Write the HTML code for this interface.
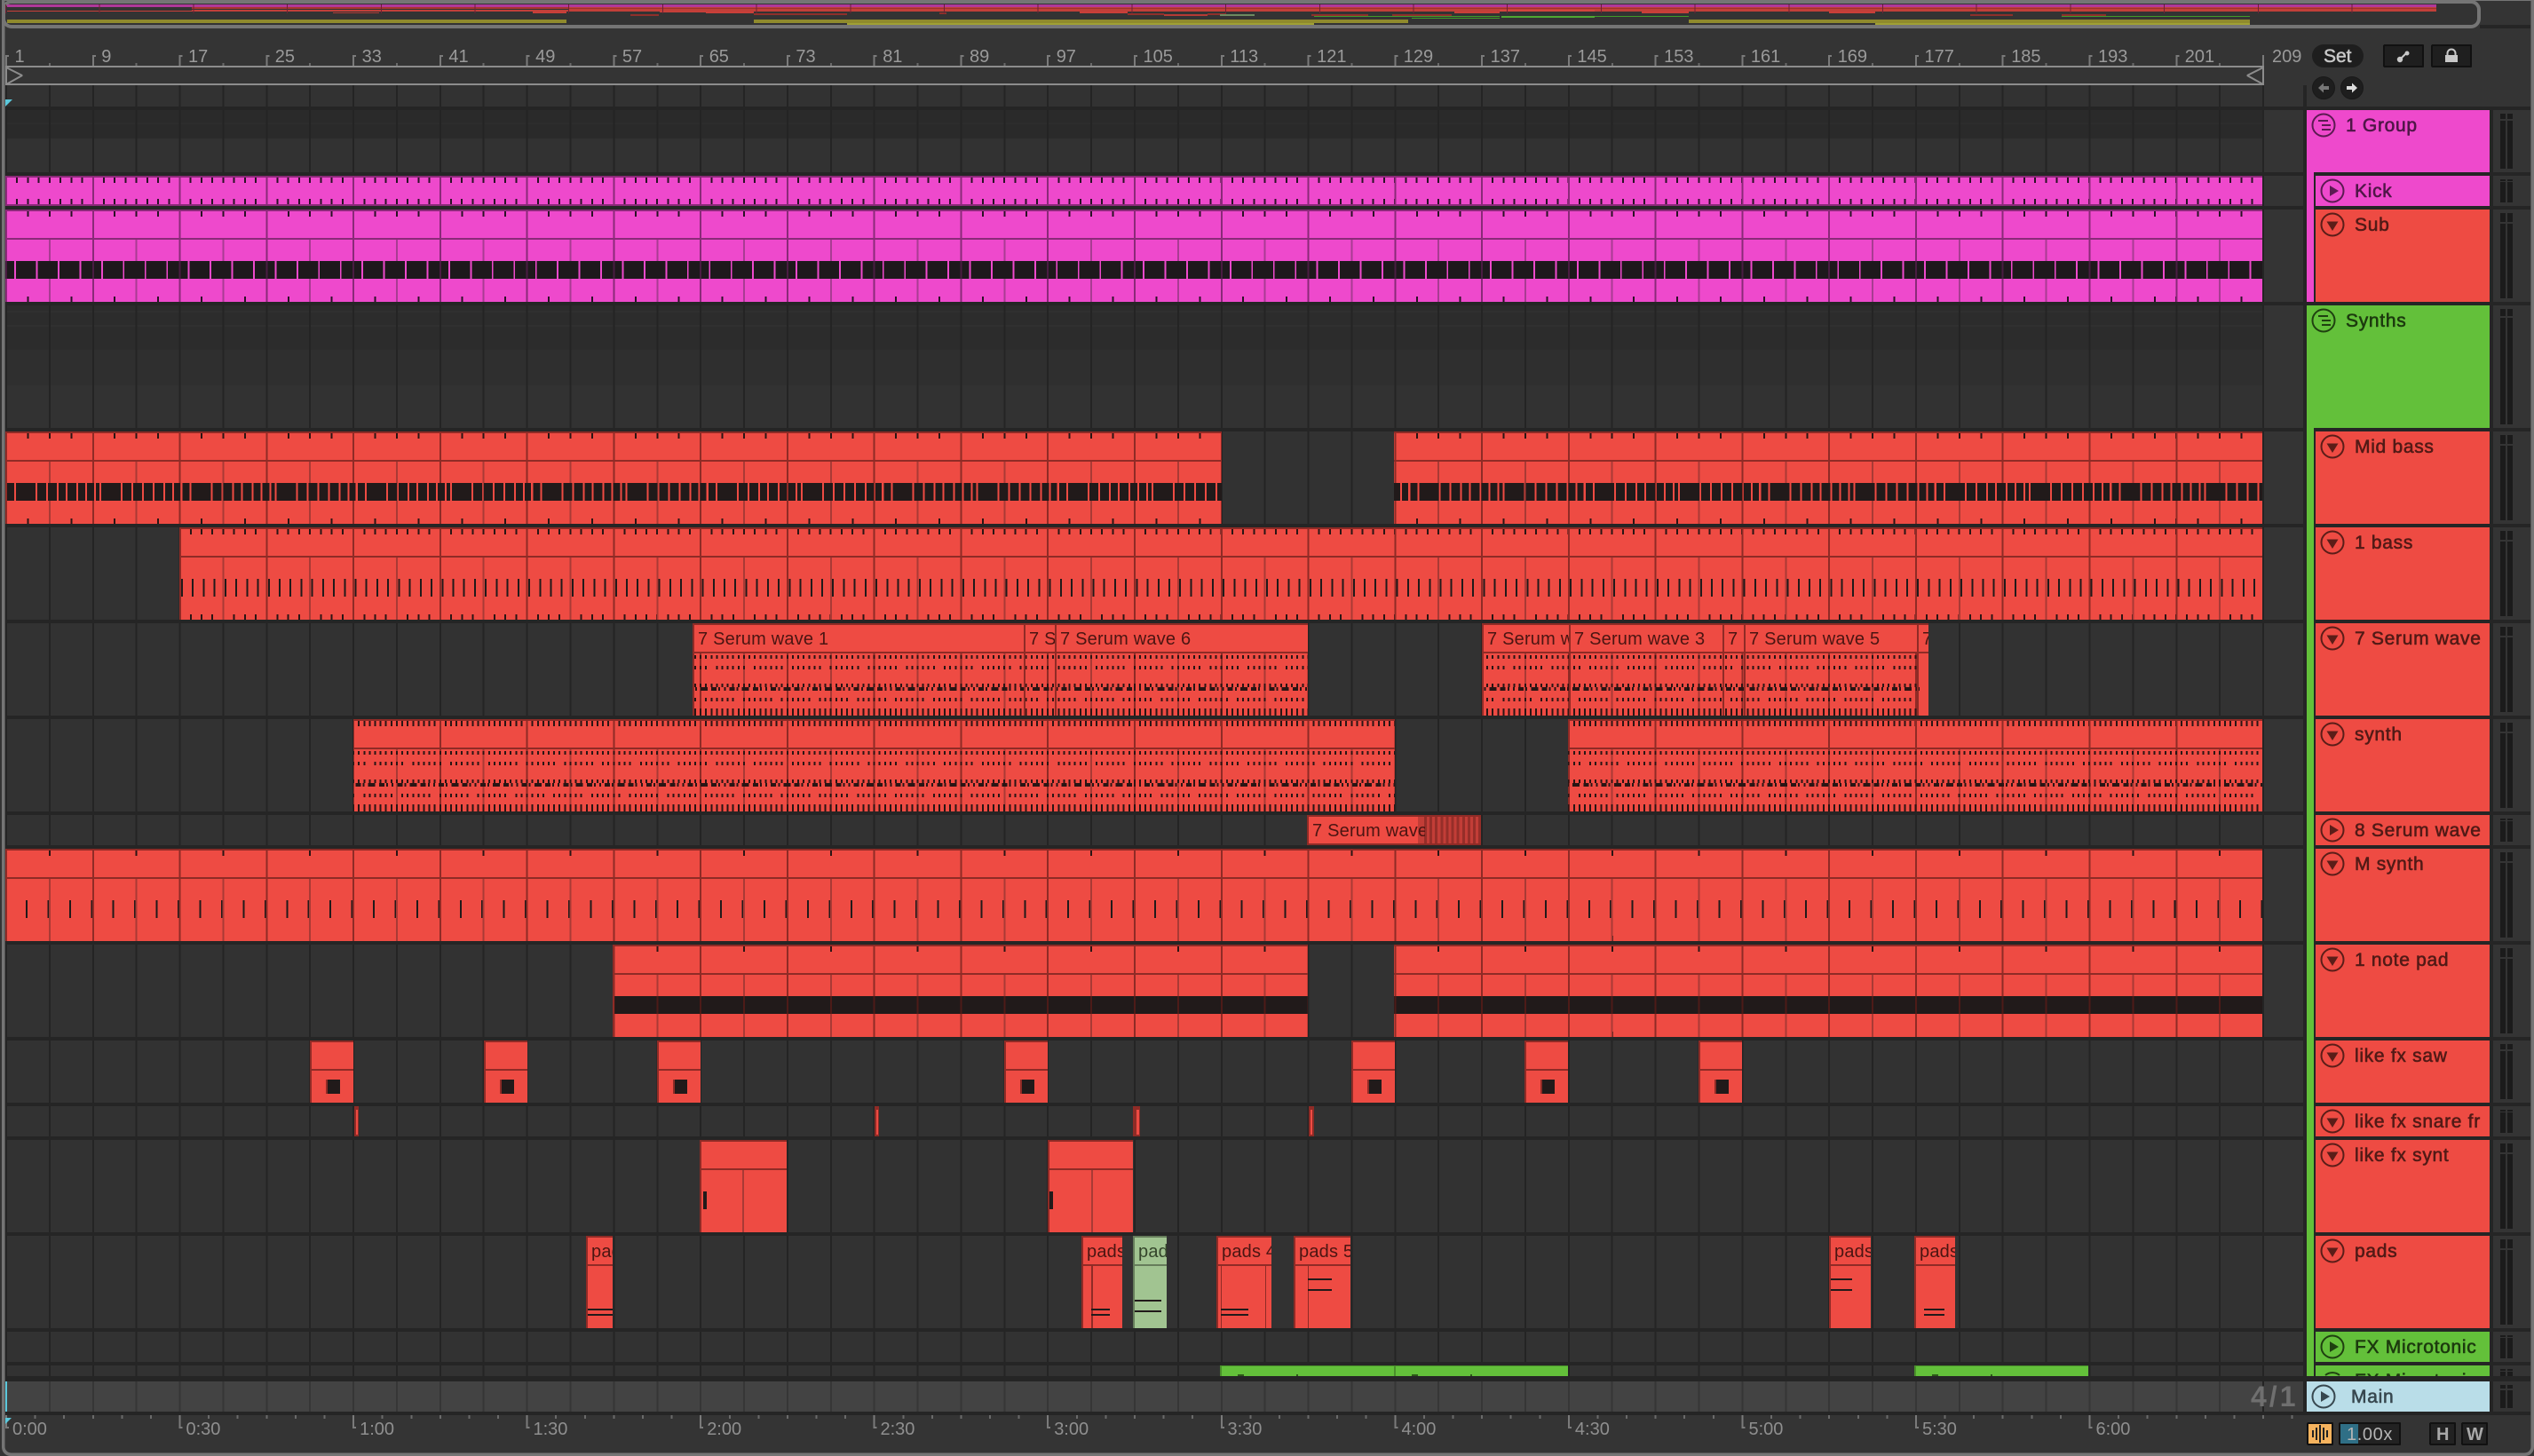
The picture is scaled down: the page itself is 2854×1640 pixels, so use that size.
<!DOCTYPE html>
<html>
<head>
<meta charset="utf-8">
<title>Arrangement</title>
<style>
html,body{margin:0;padding:0;background:#333;width:2854px;height:1640px;overflow:hidden}
svg{display:block}
svg rect{shape-rendering:crispEdges}
path{fill:none;shape-rendering:crispEdges}
*{stroke-linejoin:bevel}
text{font-family:"Liberation Sans",sans-serif}
.r{fill:#ee4b43}.d{fill:#8f2b26}.p{fill:#ee49cc}.dp{fill:#8a2a78}.g{fill:#63c03a}.k{fill:#211a1a}.gap{fill:#252525}
.maj{stroke-dasharray:2 95.77}
.min{stroke-dasharray:2 46.885}
.t24{stroke-dasharray:2 22.4425}
.t12{stroke-dasharray:2 10.22}
.t6{stroke-dasharray:2 4.11}
.rul{font-size:20px;fill:#9a9a9a}
.ct{font-size:20px;letter-spacing:.2px;fill:#4b1512}
.h{font-size:21px;letter-spacing:.7px;stroke-width:.6px;paint-order:stroke}
.hp{fill:#4f1647;stroke:#4f1647}.hr{fill:#521a16;stroke:#521a16}.hg{fill:#1c3a0e;stroke:#1c3a0e}
.i{fill:none;stroke-width:2;shape-rendering:geometricPrecision}
.ip{stroke:#5c1a52}.ir{stroke:#5b1d18}.ig{stroke:#1f4010}
</style>
</head>
<body>
<svg xmlns="http://www.w3.org/2000/svg" width="2854" height="1640" viewBox="0 0 2854 1640">
<defs>
<clipPath id="cMB"><rect x="6" y="486" width="1370" height="104"/><rect x="1570" y="486" width="978" height="104"/></clipPath>
<clipPath id="cBS"><rect x="202" y="594" width="2346" height="104"/></clipPath>
<clipPath id="cSW"><rect x="780" y="702" width="693" height="104"/><rect x="1669" y="702" width="503" height="104"/></clipPath>
<clipPath id="cSY"><rect x="398" y="810" width="1173" height="104"/><rect x="1766" y="810" width="782" height="104"/></clipPath>
<clipPath id="cNP"><rect x="690" y="1064" width="783" height="104"/><rect x="1570" y="1064" width="978" height="104"/></clipPath>
<g id="dots">
<path d="M6 38H2550" stroke="#2a1514" stroke-width="4" class="t6"/>
<path d="M6 50H2550" stroke="#2a1514" stroke-width="4" stroke-dasharray="2 4.11 2 4.11 2 4.11 2 10.22 2 4.11 2 4.11"/>
<path d="M6 70H2550" stroke="#2a1514" stroke-width="4" class="t6"/>
<path d="M6 74H2550" stroke="#2a1514" stroke-width="4" stroke-dasharray="6 2.11 2 4.11 2 4.11 6 2.11 2 4.11 8 4.22"/>
<path d="M6 86H2550" stroke="#2a1514" stroke-width="4" stroke-dasharray="2 4.11 2 10.22 2 4.11 2 4.11 2 4.11 2 4.11"/>
<path d="M6 100H2550" stroke="#2a1514" stroke-width="8" class="t6"/>
</g>
<g id="saw">
<rect x="0" y="1172" width="49" height="70" class="r"/>
<rect x="0" y="1172" width="49" height="2" class="d"/>
<rect x="0" y="1172" width="2" height="70" class="d"/>
<rect x="0" y="1204" width="49" height="2" class="d"/>
<rect x="18" y="1216" width="3" height="16" class="d"/>
<rect x="20" y="1216" width="14" height="16" class="k"/>
</g>
</defs>

<rect width="2854" height="1640" fill="#343434"/>

<!-- overview -->
<rect x="4" y="2" width="2788" height="28" rx="9" fill="#333" stroke="#757575" stroke-width="4" style="shape-rendering:geometricPrecision"/>
<rect x="8" y="5" width="2736" height="3" fill="#b0399a"/>
<rect x="8" y="12" width="208" height="1" fill="#c93f39"/>
<rect x="216" y="8" width="424" height="2" fill="#a8362f"/>
<rect x="216" y="11" width="424" height="2" fill="#c0403a"/>
<rect x="375" y="14" width="52" height="1" fill="#b03a35"/>
<rect x="600" y="13" width="38" height="2" fill="#c93f39"/>
<rect x="640" y="8" width="2104" height="5" fill="#c23f39"/>
<rect x="640" y="9" width="2104" height="1" fill="#9c322d"/>
<rect x="743" y="13" width="52" height="1" fill="#c93f39"/>
<rect x="795" y="13" width="54" height="2" fill="#c93f39"/>
<rect x="710" y="16" width="32" height="2" fill="#8e2f2b"/>
<rect x="849" y="15" width="105" height="2" fill="#8e2f2b"/>
<rect x="1058" y="14" width="8" height="2" fill="#8e2f2b"/>
<rect x="1216" y="13" width="54" height="2" fill="#c93f39"/>
<rect x="1270" y="15" width="41" height="2" fill="#8e2f2b"/>
<rect x="1311" y="16" width="49" height="2" fill="#b53a35"/>
<rect x="1360" y="15" width="21" height="2" fill="#8e2f2b"/>
<rect x="1374" y="16" width="39" height="2" fill="#6d8a60"/>
<rect x="1477" y="16" width="64" height="2" fill="#8e2f2b"/>
<rect x="1568" y="16" width="67" height="2" fill="#8e2f2b"/>
<rect x="1638" y="13" width="51" height="2" fill="#c93f39"/>
<rect x="1689" y="11" width="107" height="2" fill="#d4453e"/>
<rect x="1849" y="12" width="53" height="3" fill="#c93f39"/>
<rect x="2060" y="13" width="52" height="2" fill="#c93f39"/>
<rect x="2219" y="16" width="48" height="2" fill="#8e2f2b"/>
<rect x="2322" y="16" width="50" height="2" fill="#8e2f2b"/>
<rect x="1480" y="18" width="209" height="1" fill="#3f9a2a"/>
<rect x="1590" y="20" width="99" height="1" fill="#3f9a2a"/>
<rect x="1691" y="18" width="105" height="2" fill="#4fa832"/>
<rect x="1796" y="18" width="106" height="1" fill="#3f9a2a"/>
<rect x="2322" y="18" width="212" height="1" fill="#3f9a2a"/>
<rect x="8" y="22" width="630" height="4" fill="#8f8a2c"/>
<rect x="849" y="22" width="737" height="4" fill="#8f8a2c"/>
<rect x="1902" y="22" width="632" height="4" fill="#8f8a2c"/>
<rect x="954" y="26" width="526" height="2" fill="#a0a033"/>
<rect x="2112" y="26" width="422" height="2" fill="#a0a033"/>
<path d="M6 10H2744" stroke="#6e2035" stroke-width="10" stroke-dasharray="1 104.7"/>
<rect x="2793" y="28" width="57" height="4" fill="#252525"/>

<!-- beat ruler -->
<path d="M6 68.500H2550" stroke="#7a7a7a" stroke-width="13" class="maj"/>
<path d="M6 63H2550" stroke="#7a7a7a" stroke-width="2" stroke-dasharray="4 93.77"/>
<path d="M54.890 72.500H2550" stroke="#6a6a6a" stroke-width="3" class="maj"/>
<g transform="translate(2.500 0)">
<text class="rul" x="14" y="70">1</text><text class="rul" x="111.800" y="70">9</text><text class="rul" x="209.500" y="70">17</text><text class="rul" x="307.300" y="70">25</text><text class="rul" x="405.100" y="70">33</text><text class="rul" x="502.900" y="70">41</text><text class="rul" x="600.600" y="70">49</text><text class="rul" x="698.400" y="70">57</text><text class="rul" x="796.200" y="70">65</text><text class="rul" x="893.900" y="70">73</text><text class="rul" x="991.700" y="70">81</text><text class="rul" x="1089.500" y="70">89</text><text class="rul" x="1187.200" y="70">97</text><text class="rul" x="1285" y="70">105</text><text class="rul" x="1382.800" y="70">113</text><text class="rul" x="1480.600" y="70">121</text><text class="rul" x="1578.300" y="70">129</text><text class="rul" x="1676.100" y="70">137</text><text class="rul" x="1773.900" y="70">145</text><text class="rul" x="1871.600" y="70">153</text><text class="rul" x="1969.400" y="70">161</text><text class="rul" x="2067.200" y="70">169</text><text class="rul" x="2165" y="70">177</text><text class="rul" x="2262.700" y="70">185</text><text class="rul" x="2360.500" y="70">193</text><text class="rul" x="2458.300" y="70">201</text><text class="rul" x="2556.500" y="70">209</text>
</g>
<!-- scrub area -->
<rect x="6" y="74" width="2544" height="2" fill="#8c8c8c"/>
<rect x="6" y="94" width="2544" height="2" fill="#8c8c8c"/>
<path d="M7 76L25 85L7 95M2549 76L2531 85L2549 95M2549 74V96M7 74V96" stroke="#8c8c8c" stroke-width="2" style="shape-rendering:geometricPrecision"/>

<!-- arrangement background -->
<rect x="6" y="96" width="2544" height="1454" fill="#323232"/>
<rect x="6" y="124" width="2544" height="32" fill="#2a2a2a"/>
<rect x="6" y="138" width="2544" height="2" fill="#2d2d2d"/>
<rect x="6" y="344" width="2544" height="50" fill="#2c2c2c"/>
<rect x="6" y="350" width="2544" height="2" fill="#303030"/>
<rect x="6" y="366" width="2544" height="2" fill="#303030"/>
<rect x="6" y="394" width="2544" height="40" fill="#2f2f2f"/>
<rect x="6" y="1556" width="2544" height="34" fill="#434343"/>
<!-- grid lines, stacked rows -->
<path d="M6 188H2550" stroke="#242424" stroke-width="184" class="min"/>
<path d="M6 400H2550" stroke="#242424" stroke-width="240" class="min"/>
<path d="M6 640H2550" stroke="#242424" stroke-width="240" class="min"/>
<path d="M6 880H2550" stroke="#242424" stroke-width="240" class="min"/>
<path d="M6 1120H2550" stroke="#242424" stroke-width="240" class="min"/>
<path d="M6 1320H2550" stroke="#242424" stroke-width="160" class="min"/>
<path d="M6 1448H2550" stroke="#242424" stroke-width="96" class="min"/>
<path d="M6 1523H2550" stroke="#242424" stroke-width="54" class="min"/>
<path d="M6 1564.500H2550" stroke="#363636" stroke-width="17" class="min"/>
<path d="M6 1581.500H2550" stroke="#363636" stroke-width="17" class="min"/>
<rect x="2548" y="96" width="2" height="1494" fill="#242424"/>
<rect x="2550" y="1556" width="44" height="34" fill="#3f3f3f"/>

<!-- horizontal gaps -->
<g class="gap">
<rect x="6" y="120" width="2844" height="4"/><rect x="6" y="194" width="2844" height="4"/><rect x="6" y="232" width="2844" height="4"/><rect x="6" y="340" width="2844" height="4"/><rect x="6" y="482" width="2844" height="4"/><rect x="6" y="590" width="2844" height="4"/><rect x="6" y="698" width="2844" height="4"/><rect x="6" y="806" width="2844" height="4"/><rect x="6" y="914" width="2844" height="4"/><rect x="6" y="952" width="2844" height="4"/><rect x="6" y="1060" width="2844" height="4"/><rect x="6" y="1168" width="2844" height="4"/><rect x="6" y="1242" width="2844" height="4"/><rect x="6" y="1280" width="2844" height="4"/><rect x="6" y="1388" width="2844" height="4"/><rect x="6" y="1496" width="2844" height="4"/><rect x="6" y="1534" width="2844" height="4"/><rect x="6" y="1550" width="2844" height="6"/><rect x="6" y="1590" width="2844" height="4"/>
</g>

<!-- Kick -->
<rect x="6" y="198" width="2542" height="34" class="p"/>
<path d="M18.220 203H2548" stroke="#2a1226" stroke-width="6" class="t12"/>
<path d="M18.220 227H2548" stroke="#2a1226" stroke-width="6" class="t12"/>
<path d="M6 215H2548" stroke="#8a2a78" stroke-width="34" class="maj"/>
<rect x="6" y="198" width="2542" height="2" class="dp"/>
<rect x="6" y="230" width="2542" height="2" class="dp"/>

<!-- Sub -->
<rect x="6" y="236" width="2542" height="104" class="p"/>
<path d="M30.440 241H2548" stroke="#2a1226" stroke-width="6" class="t24"/>
<path d="M30.440 337H2548" stroke="#2a1226" stroke-width="6" class="t24"/>
<path d="M6 305H2548" stroke="#a83c92" stroke-width="70" class="min"/>
<path d="M6 288H2548" stroke="#8a2a78" stroke-width="104" class="maj"/>
<rect x="6" y="236" width="2542" height="2" class="dp"/>
<rect x="6" y="268" width="2542" height="2" class="dp"/>
<path d="M8 304H16" stroke="#1e181c" stroke-width="20"/>
<path d="M18 304H2548" stroke="#1e181c" stroke-width="20" stroke-dasharray="22.6 1.8425"/>
<path d="M6 304H2548" stroke="#4a1c42" stroke-width="20" class="maj"/>

<!-- Mid bass -->
<g clip-path="url(#cMB)">
<rect x="6" y="486" width="2544" height="104" class="r"/>
<path d="M30.440 491H2550" stroke="#2a1514" stroke-width="6" class="t24"/>
<path d="M30.440 587H2550" stroke="#2a1514" stroke-width="6" class="t24"/>
<path d="M6 555H2550" stroke="#a93a35" stroke-width="70" class="min"/>
<path d="M6 538H2550" stroke="#8f2b26" stroke-width="104" class="maj"/>
<rect x="6" y="486" width="2544" height="2" class="d"/>
<rect x="6" y="518" width="2544" height="2" class="d"/>
<path d="M8 554H2550" stroke="#211a1a" stroke-width="20" stroke-dasharray="8 2 22 2 10 2 10 2 8 2 10 2 8 2 8 2 4 2 22 2 10 2 10 2 10 2 10 2 8 2 7 2.54"/>
</g>

<!-- 1 bass -->
<g clip-path="url(#cBS)">
<rect x="202" y="594" width="2346" height="104" class="r"/>
<path d="M201.540 599H2550" stroke="#2a1514" stroke-width="6" class="t12"/>
<path d="M201.540 695H2550" stroke="#2a1514" stroke-width="6" class="t12"/>
<path d="M204 662H2550" stroke="#211a1a" stroke-width="20" class="t12"/>
<path d="M6 663H2550" stroke="#a93a35" stroke-width="70" class="min"/>
<path d="M6 646H2550" stroke="#8f2b26" stroke-width="104" class="maj"/>
<rect x="202" y="594" width="2346" height="2" class="d"/>
<rect x="202" y="626" width="2346" height="2" class="d"/>
<rect x="202" y="594" width="2" height="104" class="d"/>
</g>

<!-- 7 Serum wave -->
<g clip-path="url(#cSW)">
<rect x="780" y="702" width="2000" height="104" class="r"/>
<path d="M6 771H2550" stroke="#a93a35" stroke-width="70" class="min"/>
<path d="M6 771H2550" stroke="#8f2b26" stroke-width="70" class="maj"/>
<use href="#dots" y="702"/>
<rect x="780" y="702" width="1400" height="2" class="d"/>
<rect x="780" y="734" width="1400" height="2" class="d"/>
<g class="d">
<rect x="780" y="702" width="2" height="104"/><rect x="1153" y="702" width="2" height="104"/><rect x="1188" y="702" width="2" height="104"/><rect x="1669" y="702" width="2" height="104"/><rect x="1767" y="702" width="2" height="104"/><rect x="1940" y="702" width="2" height="104"/><rect x="1964" y="702" width="2" height="104"/><rect x="2159" y="702" width="2" height="104"/>
</g>
</g>
<rect x="2162" y="738" width="10" height="68" class="r"/>
<svg x="780" y="702" width="373" height="34"><text class="ct" x="6" y="24">7 Serum wave 1</text></svg>
<svg x="1153" y="702" width="35" height="34"><text class="ct" x="6" y="24">7 Serum wave 2</text></svg>
<svg x="1188" y="702" width="285" height="34"><text class="ct" x="6" y="24">7 Serum wave 6</text></svg>
<svg x="1669" y="702" width="98" height="34"><text class="ct" x="6" y="24">7 Serum wave 2</text></svg>
<svg x="1767" y="702" width="173" height="34"><text class="ct" x="6" y="24">7 Serum wave 3</text></svg>
<svg x="1940" y="702" width="24" height="34"><text class="ct" x="6" y="24">7 Serum wave 4</text></svg>
<svg x="1964" y="702" width="195" height="34"><text class="ct" x="6" y="24">7 Serum wave 5</text></svg>
<svg x="2159" y="702" width="13" height="34"><text class="ct" x="6" y="24">7 Serum wave 7</text></svg>

<!-- synth -->
<g clip-path="url(#cSY)">
<rect x="398" y="810" width="2150" height="104" class="r"/>
<path d="M6 815H2550" stroke="#2a1514" stroke-width="6" class="t6"/>
<path d="M6 879H2550" stroke="#a93a35" stroke-width="70" class="min"/>
<path d="M6 862H2550" stroke="#8f2b26" stroke-width="104" class="maj"/>
<use href="#dots" y="810"/>
<rect x="398" y="810" width="2150" height="2" class="d"/>
<rect x="398" y="842" width="2150" height="2" class="d"/>
</g>

<!-- 8 Serum wave clip -->
<rect x="1472" y="918" width="196" height="34" class="r"/>
<rect x="1597" y="918" width="71" height="34" fill="#c23d37"/>
<path d="M1604 935H1668" stroke="#962e29" stroke-width="32" stroke-dasharray="3 3.11"/>
<rect x="1472" y="918" width="196" height="2" class="d"/>
<rect x="1472" y="950" width="196" height="2" class="d"/>
<rect x="1472" y="918" width="2" height="34" class="d"/>
<svg x="1472" y="918" width="133" height="34"><text class="ct" x="6" y="24">7 Serum wave 8</text></svg>

<!-- M synth -->
<rect x="6" y="956" width="2542" height="104" class="r"/>
<path d="M54.890 961H2548" stroke="#2a1514" stroke-width="6" class="maj"/>
<path d="M54.890 1057H2548" stroke="#2a1514" stroke-width="6" class="maj"/>
<path d="M28.940 1024H2548" stroke="#211a1a" stroke-width="20" class="t24"/>
<path d="M6 1025H2548" stroke="#a93a35" stroke-width="70" class="min"/>
<path d="M6 1008H2548" stroke="#8f2b26" stroke-width="104" class="maj"/>
<rect x="6" y="956" width="2542" height="2" class="d"/>
<rect x="6" y="988" width="2542" height="2" class="d"/>

<!-- 1 note pad -->
<g clip-path="url(#cNP)">
<rect x="690" y="1064" width="1860" height="104" class="r"/>
<path d="M54.890 1069H2550" stroke="#2a1514" stroke-width="6" class="maj"/>
<path d="M54.890 1165H2550" stroke="#2a1514" stroke-width="6" class="maj"/>
<path d="M6 1133H2550" stroke="#a93a35" stroke-width="70" class="min"/>
<path d="M6 1116H2550" stroke="#8f2b26" stroke-width="104" class="maj"/>
<rect x="690" y="1064" width="1860" height="2" class="d"/>
<rect x="690" y="1096" width="1860" height="2" class="d"/>
<rect x="690" y="1122" width="1860" height="20" class="k"/>
<path d="M6 1132H2550" stroke="#4d1b18" stroke-width="20" class="min"/>
</g>
<rect x="690" y="1064" width="2" height="104" class="d"/>

<!-- like fx saw -->
<use href="#saw" x="349"/><use href="#saw" x="545"/><use href="#saw" x="740"/><use href="#saw" x="1131"/><use href="#saw" x="1522"/><use href="#saw" x="1717"/><use href="#saw" x="1913"/>

<!-- like fx snare -->
<rect x="399" y="1246" width="5" height="34" class="d"/><rect x="401" y="1250" width="2" height="28" class="r"/>
<rect x="985" y="1246" width="5" height="34" class="d"/><rect x="987" y="1250" width="2" height="28" class="r"/>
<rect x="1276" y="1246" width="8" height="34" class="d"/><rect x="1280" y="1250" width="3" height="28" class="r"/>
<rect x="1474" y="1246" width="6" height="34" class="d"/><rect x="1476" y="1250" width="2" height="28" class="r"/>

<!-- like fx synt -->
<rect x="788" y="1284" width="98" height="104" class="r"/>
<rect x="788" y="1284" width="98" height="2" class="d"/><rect x="788" y="1316" width="98" height="2" class="d"/><rect x="788" y="1284" width="2" height="104" class="d"/>
<rect x="836" y="1318" width="2" height="70" fill="#a93a35"/>
<rect x="792" y="1342" width="4" height="20" class="k"/>
<rect x="1180" y="1284" width="96" height="104" class="r"/>
<rect x="1180" y="1284" width="96" height="2" class="d"/><rect x="1180" y="1316" width="96" height="2" class="d"/><rect x="1180" y="1284" width="2" height="104" class="d"/>
<rect x="1229" y="1318" width="2" height="70" fill="#a93a35"/>
<rect x="1182" y="1342" width="4" height="20" class="k"/>

<!-- pads -->
<rect x="660" y="1392" width="30" height="104" class="r"/><rect x="660" y="1392" width="30" height="2" class="d"/><rect x="660" y="1424" width="30" height="2" class="d"/><rect x="660" y="1392" width="2" height="104" class="d"/>
<rect x="662" y="1474" width="28" height="2" class="k"/><rect x="662" y="1480" width="28" height="2" class="k"/>
<svg x="660" y="1392" width="30" height="34"><text class="ct" x="6" y="24">pads 1</text></svg>

<rect x="1218" y="1392" width="46" height="104" class="r"/><rect x="1218" y="1392" width="46" height="2" class="d"/><rect x="1218" y="1424" width="46" height="2" class="d"/><rect x="1218" y="1392" width="2" height="104" class="d"/><rect x="1229" y="1426" width="2" height="70" class="d"/>
<rect x="1229" y="1474" width="21" height="2" class="k"/><rect x="1229" y="1480" width="21" height="2" class="k"/>
<svg x="1218" y="1392" width="46" height="34"><text class="ct" x="6" y="24">pads 2</text></svg>

<rect x="1276" y="1392" width="38" height="104" fill="#a1c491"/><rect x="1276" y="1392" width="38" height="2" fill="#667d5b"/><rect x="1276" y="1424" width="38" height="2" fill="#667d5b"/><rect x="1276" y="1392" width="2" height="104" fill="#667d5b"/>
<rect x="1278" y="1464" width="30" height="2" class="k"/><rect x="1278" y="1476" width="30" height="2" class="k"/>
<svg x="1276" y="1392" width="38" height="34"><text class="ct" x="6" y="24" style="fill:#34452b">pads 3</text></svg>

<rect x="1370" y="1392" width="62" height="104" class="r"/><rect x="1370" y="1392" width="62" height="2" class="d"/><rect x="1370" y="1424" width="62" height="2" class="d"/><rect x="1370" y="1392" width="2" height="104" class="d"/><rect x="1375" y="1426" width="1" height="70" class="d"/><rect x="1425" y="1426" width="1" height="70" class="d"/>
<rect x="1375" y="1474" width="31" height="2" class="k"/><rect x="1375" y="1480" width="31" height="2" class="k"/>
<svg x="1370" y="1392" width="62" height="34"><text class="ct" x="6" y="24">pads 4</text></svg>

<rect x="1457" y="1392" width="64" height="104" class="r"/><rect x="1457" y="1392" width="64" height="2" class="d"/><rect x="1457" y="1424" width="64" height="2" class="d"/><rect x="1457" y="1392" width="2" height="104" class="d"/><rect x="1473" y="1426" width="1" height="70" class="d"/>
<rect x="1473" y="1440" width="27" height="2" class="k"/><rect x="1473" y="1452" width="27" height="2" class="k"/>
<svg x="1457" y="1392" width="64" height="34"><text class="ct" x="6" y="24">pads 5</text></svg>

<rect x="2060" y="1392" width="47" height="104" class="r"/><rect x="2060" y="1392" width="47" height="2" class="d"/><rect x="2060" y="1424" width="47" height="2" class="d"/><rect x="2060" y="1392" width="2" height="104" class="d"/>
<rect x="2062" y="1440" width="24" height="2" class="k"/><rect x="2062" y="1452" width="24" height="2" class="k"/>
<svg x="2060" y="1392" width="47" height="34"><text class="ct" x="6" y="24">pads 6</text></svg>

<rect x="2156" y="1392" width="46" height="104" class="r"/><rect x="2156" y="1392" width="46" height="2" class="d"/><rect x="2156" y="1424" width="46" height="2" class="d"/><rect x="2156" y="1392" width="2" height="104" class="d"/>
<rect x="2167" y="1474" width="23" height="2" class="k"/><rect x="2167" y="1480" width="23" height="2" class="k"/>
<svg x="2156" y="1392" width="46" height="34"><text class="ct" x="6" y="24">pads 7</text></svg>

<!-- FX row clips -->
<rect x="1374" y="1538" width="392" height="12" class="g"/><rect x="1374" y="1538" width="392" height="1" fill="#4a8f2b"/><rect x="1374" y="1538" width="2" height="12" fill="#4a8f2b"/><rect x="1570" y="1538" width="2" height="12" fill="#4a8f2b"/>
<rect x="1394" y="1548" width="7" height="2" fill="#2d5a18"/><rect x="1460" y="1548" width="2" height="2" fill="#2d5a18"/><rect x="1590" y="1548" width="7" height="2" fill="#2d5a18"/><rect x="1656" y="1548" width="2" height="2" fill="#2d5a18"/>
<rect x="2156" y="1538" width="196" height="12" class="g"/><rect x="2156" y="1538" width="196" height="1" fill="#4a8f2b"/><rect x="2156" y="1538" width="2" height="12" fill="#4a8f2b"/>
<rect x="2176" y="1548" width="7" height="2" fill="#2d5a18"/><rect x="2242" y="1548" width="2" height="2" fill="#2d5a18"/>

<!-- playhead markers -->
<path d="M6 112H14L6 120Z" style="fill:#5bc8dc;shape-rendering:geometricPrecision"/>
<rect x="6" y="1556" width="2" height="34" fill="#5bc8dc"/>

<!-- right gutter dark separators -->
<rect x="2594" y="96" width="4" height="1498" fill="#252525"/>
<rect x="2804" y="120" width="4" height="1474" fill="#252525"/>

<!-- Track headers -->
<rect x="2598" y="124" width="206" height="70" class="p"/>
<rect x="2598" y="194" width="8" height="146" class="p"/>
<rect x="2606" y="194" width="2" height="146" fill="#252525"/>
<rect x="2608" y="198" width="196" height="34" class="p"/>
<rect x="2608" y="236" width="196" height="104" class="r"/>
<rect x="2598" y="344" width="206" height="138" class="g"/>
<rect x="2598" y="482" width="8" height="1068" class="g"/>
<rect x="2606" y="482" width="2" height="1068" fill="#252525"/>
<rect x="2608" y="486" width="196" height="104" class="r"/>
<rect x="2608" y="594" width="196" height="104" class="r"/>
<rect x="2608" y="702" width="196" height="104" class="r"/>
<rect x="2608" y="810" width="196" height="104" class="r"/>
<rect x="2608" y="918" width="196" height="34" class="r"/>
<rect x="2608" y="956" width="196" height="104" class="r"/>
<rect x="2608" y="1064" width="196" height="104" class="r"/>
<rect x="2608" y="1172" width="196" height="70" class="r"/>
<rect x="2608" y="1246" width="196" height="34" class="r"/>
<rect x="2608" y="1284" width="196" height="104" class="r"/>
<rect x="2608" y="1392" width="196" height="104" class="r"/>
<rect x="2608" y="1500" width="196" height="34" class="g"/>
<rect x="2608" y="1538" width="196" height="12" class="g"/>
<rect x="2598" y="1556" width="206" height="34" fill="#b9dde8"/>

<!-- header icons -->
<g class="i ip"><circle cx="2617" cy="141" r="12.500"/><path class="i ip" d="M2611 136H2622M2615 141H2625M2615 146H2625"/></g>
<g class="i ip"><circle cx="2627" cy="215" r="12.500"/></g><path d="M2624 209V221L2634 215Z" style="fill:#5c1a52;shape-rendering:geometricPrecision"/>
<g class="i ig"><circle cx="2617" cy="361" r="12.500"/><path class="i ig" d="M2611 356H2622M2615 361H2625M2615 366H2625"/></g>
<g class="i ig"><circle cx="2627" cy="1517" r="12.500"/></g><path d="M2624 1511V1523L2634 1517Z" style="fill:#1f4010;shape-rendering:geometricPrecision"/>
<path class="i ig" d="M2619 1549A12.500 12.500 0 0 1 2635 1549"/>
<g class="i" style="stroke:#37474f"><circle cx="2617" cy="1573" r="12.500"/></g><path d="M2614 1567V1579L2624 1573Z" style="fill:#37474f;shape-rendering:geometricPrecision"/>
<g class="i ir">
<circle cx="2627" cy="253" r="12.500"/><circle cx="2627" cy="503" r="12.500"/><circle cx="2627" cy="611" r="12.500"/><circle cx="2627" cy="719" r="12.500"/><circle cx="2627" cy="827" r="12.500"/><circle cx="2627" cy="935" r="12.500"/><circle cx="2627" cy="973" r="12.500"/><circle cx="2627" cy="1081" r="12.500"/><circle cx="2627" cy="1189" r="12.500"/><circle cx="2627" cy="1263" r="12.500"/><circle cx="2627" cy="1301" r="12.500"/><circle cx="2627" cy="1409" r="12.500"/>
</g>
<path style="fill:#5b1d18;shape-rendering:geometricPrecision" d="M2620.500 249.500H2633.500L2627 260ZM2620.500 499.500H2633.500L2627 510ZM2620.500 607.500H2633.500L2627 618ZM2620.500 715.500H2633.500L2627 726ZM2620.500 823.500H2633.500L2627 834ZM2624 929V941L2634 935ZM2620.500 969.500H2633.500L2627 980ZM2620.500 1077.500H2633.500L2627 1088ZM2620.500 1185.500H2633.500L2627 1196ZM2620.500 1259.500H2633.500L2627 1270ZM2620.500 1297.500H2633.500L2627 1308ZM2620.500 1405.500H2633.500L2627 1416Z"/>

<!-- header text -->
<text class="h hp" x="2642" y="148">1 Group</text>
<text class="h hp" x="2652" y="222">Kick</text>
<text class="h hr" x="2652" y="260">Sub</text>
<text class="h hg" x="2642" y="368">Synths</text>
<text class="h hr" x="2652" y="510">Mid bass</text>
<text class="h hr" x="2652" y="618">1 bass</text>
<text class="h hr" x="2652" y="726">7 Serum wave</text>
<text class="h hr" x="2652" y="834">synth</text>
<text class="h hr" x="2652" y="942">8 Serum wave</text>
<text class="h hr" x="2652" y="980">M synth</text>
<text class="h hr" x="2652" y="1088">1 note pad</text>
<text class="h hr" x="2652" y="1196">like fx saw</text>
<text class="h hr" x="2652" y="1270">like fx snare fr</text>
<text class="h hr" x="2652" y="1308">like fx synt</text>
<text class="h hr" x="2652" y="1416">pads</text>
<text class="h hg" x="2652" y="1524">FX Microtonic</text>
<svg x="2608" y="1538" width="196" height="12"><text class="h hg" x="44" y="24">FX Microtonic</text></svg>
<text class="h" x="2648" y="1580" style="fill:#37474f;stroke:#37474f">Main</text>

<!-- meters -->
<path id="mtr" style="fill:#1b1b1b" d="M2816 128h6v6h-6zM2816 136h6v54h-6zM2816 202h6v2h-6zM2816 205h6v23h-6zM2816 240h6v10h-6zM2816 252h6v84h-6zM2816 348h6v8h-6zM2816 358h6v120h-6zM2816 490h6v10h-6zM2816 502h6v84h-6zM2816 598h6v10h-6zM2816 610h6v84h-6zM2816 706h6v10h-6zM2816 718h6v84h-6zM2816 814h6v10h-6zM2816 826h6v84h-6zM2816 922h6v2h-6zM2816 925h6v23h-6zM2816 960h6v10h-6zM2816 972h6v84h-6zM2816 1068h6v10h-6zM2816 1080h6v84h-6zM2816 1176h6v6h-6zM2816 1184h6v54h-6zM2816 1250h6v2h-6zM2816 1253h6v23h-6zM2816 1288h6v10h-6zM2816 1300h6v84h-6zM2816 1396h6v10h-6zM2816 1408h6v84h-6zM2816 1504h6v2h-6zM2816 1507h6v23h-6zM2816 1542h6v2h-6zM2816 1545h6v5h-6zM2816 1560h6v4h-6zM2816 1566h6v20h-6z"/>
<use href="#mtr" x="8"/>

<!-- top right controls -->
<rect x="2604" y="50" width="58" height="26" rx="13" fill="#1e1e1e" style="shape-rendering:geometricPrecision"/>
<text x="2617" y="70" font-size="21" fill="#c8c8c8" stroke="#c8c8c8" stroke-width=".5">Set</text>
<rect x="2685" y="51" width="44" height="24" fill="#1f1f1f" stroke="#111" stroke-width="2"/>
<rect x="2739" y="51" width="44" height="24" fill="#1f1f1f" stroke="#111" stroke-width="2"/>
<path d="M2703 67L2711 59" stroke="#c8c8c8" stroke-width="2" style="shape-rendering:geometricPrecision"/>
<circle cx="2703" cy="67" r="3.200" fill="#c8c8c8"/><circle cx="2711" cy="60" r="2.500" fill="#c8c8c8"/>
<rect x="2754" y="62" width="14" height="8" fill="#c8c8c8"/>
<path d="M2756.500 62V60A4.500 4.500 0 0 1 2765.500 60V62" stroke="#c8c8c8" stroke-width="2" style="shape-rendering:geometricPrecision"/>
<circle cx="2617" cy="99" r="12.500" fill="#1e1e1e" stroke="#191919" stroke-width="1"/>
<circle cx="2649" cy="99" r="12.500" fill="#1e1e1e" stroke="#191919" stroke-width="1"/>
<path d="M2611 99L2617 93.500V97H2623V101H2617V104.500Z" style="fill:#777;shape-rendering:geometricPrecision"/>
<path d="M2655 99L2649 93.500V97H2643V101H2649V104.500Z" style="fill:#ddd;shape-rendering:geometricPrecision"/>

<!-- time ruler -->
<path d="M6 1596H2590" stroke="#6a6a6a" stroke-width="4" stroke-dasharray="2 30.59"/>
<path d="M6 1601.500H2500" stroke="#7a7a7a" stroke-width="15" stroke-dasharray="2 193.54"/>
<path d="M6 1608H2500" stroke="#7a7a7a" stroke-width="2" stroke-dasharray="4 191.54"/>
<path d="M6 1597H13L6 1604Z" style="fill:#5bc8dc;shape-rendering:geometricPrecision"/>
<g font-size="20" fill="#8f8f8f" transform="translate(1.500 0)">
<text x="12.500" y="1616">0:00</text><text x="208" y="1616">0:30</text><text x="403.600" y="1616">1:00</text><text x="599" y="1616">1:30</text><text x="794.700" y="1616">2:00</text><text x="990" y="1616">2:30</text><text x="1185.700" y="1616">3:00</text><text x="1381" y="1616">3:30</text><text x="1577" y="1616">4:00</text><text x="1772.400" y="1616">4:30</text><text x="1968" y="1616">5:00</text><text x="2163.500" y="1616">5:30</text><text x="2359" y="1616">6:00</text>
</g>
<text x="2535" y="1584" font-size="32" font-weight="700" letter-spacing="3" fill="#6f6f6f">4/1</text>

<!-- bottom right controls -->
<rect x="2599" y="1603" width="28" height="24" fill="#f6b35e" stroke="#111" stroke-width="2"/>
<path d="M2605 1611V1619M2609 1608V1622M2613 1605V1625M2617 1608V1622M2621 1611V1619" stroke="#222" stroke-width="2"/>
<rect x="2635" y="1603" width="68" height="24" fill="#222" stroke="#111" stroke-width="2"/>
<rect x="2636" y="1604" width="20" height="22" fill="#2f6f86"/>
<text x="2643" y="1622" font-size="20" letter-spacing=".6" fill="#b4b4b4">1.00x</text>
<rect x="2737" y="1603" width="28" height="24" fill="#222" stroke="#111" stroke-width="2"/>
<rect x="2773" y="1603" width="28" height="24" fill="#222" stroke="#111" stroke-width="2"/>
<text x="2744" y="1622" font-size="20" font-weight="700" fill="#a8a8a8">H</text>
<text x="2778" y="1622" font-size="20" font-weight="700" fill="#a8a8a8">W</text>

<!-- outer frame, a filled ring with no stroke -->
<path style="fill:#757575;fill-rule:evenodd;stroke:none;shape-rendering:geometricPrecision" d="M2 0H2854V1630A10 10 0 0 1 2844 1640H12A10 10 0 0 1 2 1630ZM5.500 1H2850.500V1629A7 7 0 0 1 2843.500 1636.500H12.500A7 7 0 0 1 5.500 1629Z"/>
</svg>
</body>
</html>
